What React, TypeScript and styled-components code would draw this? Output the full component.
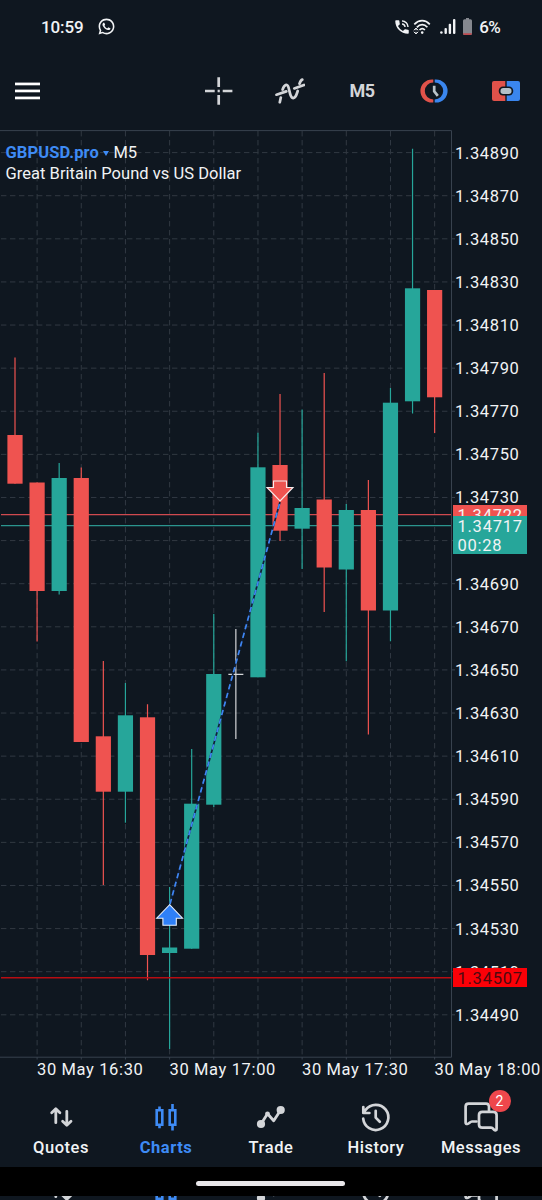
import React from "react";
import styled, { createGlobalStyle } from "styled-components";
import { RiWhatsappLine } from "react-icons/ri";
import { MdPhoneInTalk } from "react-icons/md";

const color = {
  bg: "#0f1720",
  text: "#f1f3f5",
  icon: "#d3d5d8",
  blue: "#3e8bf5",
  up: "#26a69a",
  down: "#ef5350",
  grid: "#313942",
  frame: "#38424e",
};

const GlobalStyle = createGlobalStyle`
  * { box-sizing: border-box; }
  body {
    margin: 0;
    background: ${color.bg};
    font-family: Roboto, "Liberation Sans", sans-serif;
    color: ${color.text};
  }
  svg { display: block; }
`;

const Screen = styled.div`
  width: 542px;
  height: 1200px;
  display: flex;
  flex-direction: column;
  overflow: hidden;
  background: ${color.bg};
`;

const StatusBar = styled.header`
  height: 54px;
  flex: none;
  display: flex;
  align-items: center;
  justify-content: space-between;
  padding: 0 42px 1px 41px;
`;

const StatusGroup = styled.div<{ $gap: number }>`
  display: flex;
  align-items: center;
  gap: ${(p) => p.$gap}px;
`;

const StatusText = styled.span<{ $size: number; $spacing: number }>`
  font-size: ${(p) => p.$size}px;
  font-weight: 500;
  line-height: 20px;
  letter-spacing: ${(p) => p.$spacing}px;
`;

const Toolbar = styled.div`
  height: 76px;
  flex: none;
  display: flex;
  align-items: center;
  justify-content: space-between;
  padding: 0 0 2px 15px;
`;

const ToolButton = styled.button<{ $width: number }>`
  width: ${(p) => p.$width}px;
  height: 40px;
  padding: 0;
  border: 0;
  background: none;
  display: flex;
  align-items: center;
  justify-content: center;
  color: ${color.icon};
  font: 700 18px/40px Roboto, sans-serif;
  letter-spacing: -0.5px;
`;

const Tools = styled.div`
  display: flex;
`;

const Chart = styled.main`
  position: relative;
  flex: none;
  height: 956px;
  display: grid;
  grid-template-columns: 456px 1fr;
  grid-template-rows: 930px 26px;
`;

const ChartTitle = styled.div`
  position: absolute;
  left: 5.5px;
  top: 13px;
  font-size: 16.5px;
  line-height: 20.5px;
  letter-spacing: 0.03px;
  white-space: nowrap;
`;

const TitleRow = styled.div`
  display: flex;
  align-items: center;
`;

const Symbol = styled.span`
  color: ${color.blue};
  font-weight: 700;
  letter-spacing: 0.1px;
`;

const Caret = styled.span`
  width: 0;
  height: 0;
  margin: 0 4px 0 4.5px;
  border: 3px solid transparent;
  border-top: 5.5px solid ${color.blue};
  border-bottom: 0;
`;

const PriceAxis = styled.div`
  padding-top: 1.6px;
`;

const PriceLabel = styled.div`
  height: 43.11px;
  line-height: 43.11px;
  font-size: 16.5px;
  letter-spacing: 0.65px;
  margin-left: -1px;
`;

const TimeAxis = styled.div`
  grid-column: 1 / -1;
  display: flex;
  padding-left: 37px;
`;

const TimeLabel = styled.div`
  flex: none;
  width: 132.5px;
  font-size: 16.5px;
  line-height: 20px;
  letter-spacing: 0.63px;
  white-space: nowrap;
`;

const PriceTag = styled.div<{ $top: number; $height: number; $bg: string; $fg?: string }>`
  position: absolute;
  left: 453px;
  top: ${(p) => p.$top}px;
  width: 74px;
  height: ${(p) => p.$height}px;
  padding: 1px 0 0 4.5px;
  overflow: hidden;
  background: ${(p) => p.$bg};
  color: ${(p) => p.$fg ?? color.text};
  font-size: 16.5px;
  line-height: 19px;
  letter-spacing: 0.75px;
`;

const NavBar = styled.nav`
  height: 81px;
  flex: none;
  display: flex;
  justify-content: center;
  padding-top: 13px;
`;

const NavItem = styled.div<{ $active?: boolean }>`
  position: relative;
  width: 105px;
  display: flex;
  flex-direction: column;
  align-items: center;
  color: ${(p) => (p.$active ? color.blue : color.icon)};
`;

const NavLabel = styled.span<{ $active?: boolean }>`
  margin-top: 3px;
  font-size: 16.5px;
  line-height: 20px;
  letter-spacing: 0.55px;
  font-weight: ${(p) => (p.$active ? 700 : 500)};
  color: ${(p) => (p.$active ? color.blue : color.text)};
`;

const Badge = styled.span`
  position: absolute;
  left: 60px;
  top: -9.5px;
  width: 22px;
  height: 22px;
  border-radius: 50%;
  background: #ef474c;
  color: #fff;
  font-size: 14px;
  line-height: 22px;
  text-align: center;
`;

const GestureBar = styled.div`
  height: 29px;
  flex: none;
  background: #000;
  display: flex;
  justify-content: center;
  padding: 13.5px 2px 0 0;
`;

const GestureHandle = styled.div`
  width: 149px;
  height: 5.5px;
  border-radius: 3px;
  background: #e9e7ea;
`;

const BottomEdge = styled.div`
  height: 4px;
  flex: none;
  overflow: hidden;
  display: flex;
  justify-content: center;
`;

const EdgeItem = styled.div<{ $active?: boolean }>`
  width: 105px;
  display: flex;
  justify-content: center;
  margin-top: -23.5px;
  color: ${(p) => (p.$active ? color.blue : color.icon)};
`;

const NavSvg = ({ children, width = 2.6 }: { children: React.ReactNode; width?: number }) => (
  <svg width="40" height="36" viewBox="0 0 40 36" fill="none" stroke="currentColor" strokeWidth={width} strokeLinecap="round" strokeLinejoin="round">
    {children}
  </svg>
);

const QuotesIcon = () => (
  <NavSvg width={2.8}>
    <path d="M14.8 23.7V10M10.7 13.7L14.8 9.7L18.9 13.7M25.8 12.3V26M21.6 22.2L25.8 26.3L30 22.2" />
  </NavSvg>
);

const CandlesIcon = () => (
  <NavSvg width={2.6}>
    <path strokeLinecap="butt" strokeLinejoin="miter" d="M10.7 11.3H16.3V25.8H10.7ZM13.5 7.5V11M13.5 26V29.3M23.7 11.3H29.3V25.8H23.7ZM26.5 5V11M26.5 26V31.5" />
  </NavSvg>
);

const TradeIcon = () => (
  <NavSvg width={2.8}>
    <path d="M10 25L16.5 14.8L22.7 21.8L29.7 11" />
    <circle cx="10" cy="25" r="4.1" fill="currentColor" stroke="none" />
    <circle cx="16.5" cy="14.8" r="2.4" fill="currentColor" stroke="none" />
    <circle cx="29.7" cy="11" r="4.1" fill="currentColor" stroke="none" />
  </NavSvg>
);

const HistoryIcon = () => (
  <NavSvg width={2.7}>
    <path d="M7.2 19.6A12.6 12.6 0 1 0 9.6 10.9L7.5 13.6M7.3 8V14H13.4M19.7 11.8V18.6L23.8 22.8" />
  </NavSvg>
);

const MessagesIcon = () => (
  <NavSvg width={2.7}>
    <path d="M15.5 22.5H11C9 22.5 8.3 24.7 6.3 25C5.2 25.1 4.6 24.5 4.6 23.5V7.6Q4.6 4.6 7.6 4.6H25Q28 4.6 28 7.6V11.5" />
    <path d="M21.3 12.8H32.3Q35.6 12.8 35.6 16V30C35.6 31.5 34.3 31.7 33.3 30.9C32.3 29.8 31.7 28.6 30 28.6H21.3Q18 28.6 18 25.4V16Q18 12.8 21.3 12.8Z" />
  </NavSvg>
);

const navItems = [
  { label: "Quotes", Icon: QuotesIcon },
  { label: "Charts", Icon: CandlesIcon, active: true },
  { label: "Trade", Icon: TradeIcon },
  { label: "History", Icon: HistoryIcon },
  { label: "Messages", Icon: MessagesIcon, badge: "2" },
];

type Kind = "up" | "down" | "doji";
// high, body top, body bottom, low: offsets from the top of the plot
const candles: [number, number, number, number, Kind][] = [
  [227.5, 305, 353.7, 353.7, "down"],
  [352.5, 352.5, 461, 511.5, "down"],
  [333, 348, 461, 464.5, "up"],
  [337.5, 348, 612, 612, "down"],
  [531, 606.3, 661.7, 755, "down"],
  [553, 585.3, 661.7, 692.7, "up"],
  [574.3, 587.3, 825, 850.3, "down"],
  [757, 817.5, 823, 919, "up"],
  [619, 673.7, 818.7, 818.7, "up"],
  [484, 544, 674.7, 677, "up"],
  [499, 544.3, 544.3, 609, "doji"],
  [302.7, 337.3, 547.3, 547.3, "up"],
  [264, 335, 400.7, 411, "down"],
  [279.5, 378, 398.7, 439, "up"],
  [243, 369.5, 437.5, 482, "down"],
  [374, 380, 439.5, 531.3, "up"],
  [350, 380, 480.5, 604.5, "down"],
  [258, 272.7, 480.5, 511.3, "up"],
  [18.7, 158.3, 271.3, 283.5, "up"],
  [160, 160, 267.3, 303, "down"],
];

const STEP = 22.086;
const candleX = (i: number) => 15 + STEP * i;
const gridX = Array.from({ length: 10 }, (_, i) => 37.1 + i * STEP * 2);
const gridY = Array.from({ length: 21 }, (_, i) => 22.6 + i * 43.11);

const Plot = () => (
  <svg width="456" height="930" viewBox="0 0 456 930">
    <g stroke={color.grid} strokeWidth="1">
      {gridX.map((x) => (
        <line key={x} x1={x} x2={x} y1="1" y2="927" strokeDasharray="5.4 3.6" />
      ))}
      {gridY.map((y) => (
        <line key={y} x1="1" x2="451" y1={y} y2={y} strokeDasharray="5.4 3.6" />
      ))}
    </g>
    <g stroke={color.frame}>
      <path fill="none" d="M0 .6H451.5V927.2H0" />
      {gridY.map((y) => (
        <line key={y} x1="451.5" x2="455" y1={y} y2={y} />
      ))}
      {gridX.map((x) => (
        <line key={x} x1={x} x2={x} y1="927" y2="929.5" />
      ))}
    </g>
    <line x1="1" x2="451" y1="384.6" y2="384.6" stroke="#d04a4f" strokeWidth="1.2" />
    <line x1="1" x2="451" y1="395.7" y2="395.7" stroke="#2b958e" strokeWidth="1.2" />
    {candles.map(([high, top, bottom, low, kind], i) => {
      const x = candleX(i);
      if (kind === "doji") {
        return <path key={i} stroke="#d4d6d8" strokeWidth="1.2" d={`M${x} ${high}V${low}M${x - 7.5} ${top}H${x + 7.5}`} />;
      }
      return (
        <g key={i}>
          <line x1={x} x2={x} y1={high} y2={low} stroke={color[kind]} strokeWidth="1.2" />
          <rect x={x - 7.6} y={top} width="15.2" height={bottom - top} fill={color[kind]} />
        </g>
      );
    })}
    <line x1="1" x2="451" y1="847.7" y2="847.7" stroke="#b80d12" strokeWidth="1.5" />
    <line x1="170" y1="774" x2="280" y2="372" stroke="#10203a" strokeWidth="1.7" />
    <line x1="170" y1="774" x2="280" y2="372" stroke="#3f86f3" strokeWidth="1.7" strokeDasharray="5.3 3.6" />
    <path d="M169.6 774.7L182.5 788.2H176.3V795.3H162.9V788.2H156.7Z" fill="#2f80f7" stroke="#e8eefa" strokeWidth="1.1" />
    <path d="M280 371L293 357.5H286.5V351H273.5V357.5H267Z" fill="#ef5350" stroke="#f6ecec" strokeWidth="1.1" />
  </svg>
);

const WifiIcon = () => (
  <svg width="18" height="16" viewBox="0 0 18 16" fill="none" stroke="#f1f3f5" strokeWidth="1.7">
    <path d="M1.3 5.3C6 .5 12.3 .5 16.8 5.3M3.8 8.3C7.2 4.8 11.2 4.8 14.4 8.3M6.5 11C8.3 9.2 10.2 9.2 11.9 11" />
    <circle cx="9.2" cy="13.6" r="1.3" fill="#f1f3f5" stroke="none" />
    <path d="M3 9V11.2M3 12.8V15M.8 11.3L3 9.2L5.2 11.3M.8 12.8L3 14.9L5.2 12.8" strokeWidth="1" />
  </svg>
);

const SignalIcon = () => (
  <svg width="16" height="15" viewBox="0 0 16 15" fill="#f1f3f5">
    <circle cx="1.4" cy="13.5" r="1.3" />
    <rect x="4.5" y="9" width="2.4" height="6" rx="1" />
    <rect x="8.7" y="4.8" width="2.4" height="10.2" rx="1" />
    <rect x="13" y="0" width="2.4" height="15" rx="1" />
  </svg>
);

const BatteryIcon = () => (
  <svg width="9" height="17" viewBox="0 0 9 17">
    <path fill="#85888f" d="M3 0H6V1.2H7.5Q9 1.2 9 2.7V15.5Q9 17 7.5 17H1.5Q0 17 0 15.5V2.7Q0 1.2 1.5 1.2H3Z" />
    <path fill="#c0494e" d="M0 15.2H9Q9 17 7.5 17H1.5Q0 17 0 15.2Z" />
  </svg>
);

const MenuIcon = () => (
  <svg width="25" height="18" viewBox="0 0 25 18" fill="#fff">
    <rect y="0.6" width="25" height="2.7" />
    <rect y="7.6" width="25" height="2.7" />
    <rect y="14.6" width="25" height="2.7" />
  </svg>
);

const CrosshairIcon = () => (
  <svg width="28" height="28" viewBox="-0.7 0 28 28" fill="none" stroke="currentColor" strokeWidth="2.7" overflow="visible">
    <path d="M14 .3V10M14 18V27.7M.3 14H10M18 14H27.7M12.9 14H15.1" />
  </svg>
);

const IndicatorIcon = () => (
  <svg width="30" height="26" viewBox="0 0 30 26" fill="none" stroke="currentColor" strokeWidth="2.7" strokeLinecap="round">
    <path d="M1.5 16.7L11.3 13.4M19.3 10.4L29 6.9" />
    <path d="M4.8 24.3L5.8 19.5M7.6 11.5C9.3 6.5 12.2 5.3 13.5 9.3C14.8 13.5 15 19 17.6 20C20.5 20.8 21.5 16.5 22.7 13M24.5 5.7C25.3 3.3 26 2 27.3 1.6" />
  </svg>
);

const OneClickIcon = () => (
  <svg width="28" height="24" viewBox="0 0 28 24" fill="none">
    <path d="M13.3 .4V3.5A8.5 8.5 0 0 0 13.3 20.5V23.6H12A11.6 11.6 0 0 1 12 .4Z" fill="#e0524a" />
    <path d="M14.7 .4V3.5A8.5 8.5 0 0 1 14.7 20.5V23.6H16A11.6 11.6 0 0 0 16 .4Z" fill="#3a86ee" />
    <path d="M14.2 6.8V12.3L17.8 16.8" stroke="#b9c3c9" strokeWidth="2.7" />
  </svg>
);

const TradePanelIcon = () => (
  <svg width="28" height="20" viewBox="0 0 28 20">
    <path d="M2 0H13.3V20H2Q0 20 0 18V2Q0 0 2 0Z" fill="#e0524a" />
    <path d="M14.7 0H26Q28 0 28 2V18Q28 20 26 20H14.7Z" fill="#3a86ee" />
    <rect x="6.8" y="5.4" width="14.4" height="9.2" rx="4.2" fill="#0f1720" />
    <rect x="8.5" y="7" width="11" height="6" rx="2.7" fill="#b3c0c8" />
  </svg>
);

const prices = Array.from({ length: 21 }, (_, i) => (1.3489 - i * 0.0002).toFixed(5));

export default function App() {
  return (
    <>
      <GlobalStyle />
      <Screen>
        <StatusBar>
          <StatusGroup $gap={13}>
            <StatusText $size={17} $spacing={-0.1}>10:59</StatusText>
            <RiWhatsappLine size={19} />
          </StatusGroup>
          <StatusGroup $gap={2}>
            <MdPhoneInTalk size={18} />
            <WifiIcon />
            <StatusGroup $gap={7}>
              <span />
              <SignalIcon />
              <BatteryIcon />
              <StatusText $size={17} $spacing={-0.7}>6%</StatusText>
            </StatusGroup>
          </StatusGroup>
        </StatusBar>

        <Toolbar>
          <ToolButton $width={25}><MenuIcon /></ToolButton>
          <Tools>
            <ToolButton $width={72}><CrosshairIcon /></ToolButton>
            <ToolButton $width={72}><IndicatorIcon /></ToolButton>
            <ToolButton $width={72}>M5</ToolButton>
            <ToolButton $width={72}><OneClickIcon /></ToolButton>
            <ToolButton $width={72}><TradePanelIcon /></ToolButton>
          </Tools>
        </Toolbar>

        <Chart>
          <Plot />
          <PriceAxis>
            {prices.map((p) => (
              <PriceLabel key={p}>{p === "1.34710" ? "" : p}</PriceLabel>
            ))}
          </PriceAxis>
          <TimeAxis>
            {["16:30", "17:00", "17:30", "18:00"].map((t) => (
              <TimeLabel key={t}>30 May {t}</TimeLabel>
            ))}
          </TimeAxis>
          <ChartTitle>
            <TitleRow>
              <Symbol>GBPUSD.pro</Symbol>
              <Caret />
              <span>M5</span>
            </TitleRow>
            <div>Great Britain Pound vs US Dollar</div>
          </ChartTitle>
          <PriceTag $top={375} $height={19} $bg={color.down}>1.34722</PriceTag>
          <PriceTag $top={386} $height={38} $bg={color.up}>
            1.34717
            <br />
            00:28
          </PriceTag>
          <PriceTag $top={838} $height={19} $bg="#fb0007" $fg="#4d0a10">1.34507</PriceTag>
        </Chart>

        <NavBar>
          {navItems.map(({ label, Icon, active, badge }) => (
            <NavItem key={label} $active={active}>
              <Icon />
              <NavLabel $active={active}>{label}</NavLabel>
              {badge && <Badge>{badge}</Badge>}
            </NavItem>
          ))}
        </NavBar>
        <GestureBar>
          <GestureHandle />
        </GestureBar>
        <BottomEdge>
          {navItems.map(({ label, Icon, active }) => (
            <EdgeItem key={label} $active={active}>
              <Icon />
            </EdgeItem>
          ))}
        </BottomEdge>
      </Screen>
    </>
  );
}
